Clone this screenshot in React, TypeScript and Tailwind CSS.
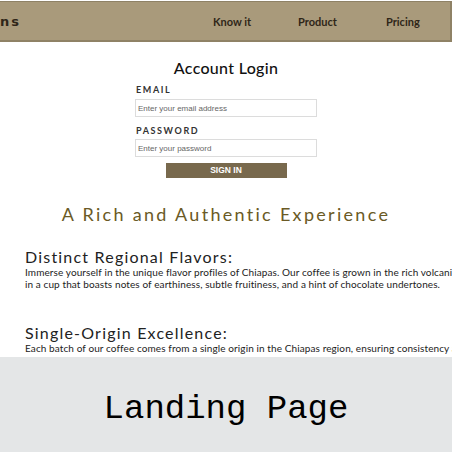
export default function App() {
  return (
    <div className="relative w-[452px] h-[452px] overflow-hidden bg-white font-['Lato','Open_Sans',sans-serif]">
      {/* Header */}
      <header className="mt-px h-[41px] flex items-center bg-[#a99a7b] border-t border-b-2 border-r-2 border-[#8f8266] text-[#2f2618]">
        <span className="mt-[2px] text-[13px] font-bold tracking-[2px] font-['DejaVu_Sans',sans-serif]">ns</span>
        <nav className="ml-auto mt-[2px] flex items-center text-[11px] font-bold">
          <a className="w-[85px]">Know it</a>
          <a className="w-[88px]">Product</a>
          <a className="w-[64px]">Pricing</a>
        </nav>
      </header>

      {/* Login */}
      <section className="flex flex-col items-center">
        <h1 className="mt-[16px] text-[16px] leading-[20px] font-medium tracking-[0.3px] text-[#111]">Account Login</h1>
        <form className="w-[182px] mt-[6px] flex flex-col">
          <label className="text-[9px] leading-[12px] font-bold tracking-[1.6px] text-[#333] pl-px">EMAIL</label>
          <input
            placeholder="Enter your email address"
            className="mt-[3px] h-[18px] border border-[#dcdcdc] px-[2px] text-[8px] font-['Liberation_Sans',sans-serif] placeholder:text-[#666] outline-none"
          />
          <label className="mt-[8px] text-[9px] leading-[12px] font-bold tracking-[1.6px] text-[#333] pl-px">PASSWORD</label>
          <input
            placeholder="Enter your password"
            className="mt-[2px] h-[18px] border border-[#dcdcdc] px-[2px] text-[8px] font-['Liberation_Sans',sans-serif] placeholder:text-[#666] outline-none"
          />
          <button
            type="button"
            className="self-center mt-[6px] w-[121px] h-[15px] bg-[#78694d] text-white text-[8.5px] font-bold font-['Liberation_Sans',sans-serif] leading-[15px]"
          >
            SIGN IN
          </button>
        </form>
      </section>

      {/* Experience */}
      <section>
        <h2 className="mt-[24px] text-center text-[18px] leading-[24px] tracking-[2.3px] text-[#6a5a25]">
          A Rich and Authentic Experience
        </h2>
        <div className="pl-[25px]">
          <h3 className="mt-[22px] text-[16px] leading-[18px] tracking-[1.2px] text-[#222]">Distinct Regional Flavors:</h3>
          <p className="text-[10px] leading-[12px] tracking-[0.1px] whitespace-nowrap text-[#222]">
            Immerse yourself in the unique flavor profiles of Chiapas. Our coffee is grown in the rich volcanic soils of the region, resulting
            <br />
            in a cup that boasts notes of earthiness, subtle fruitiness, and a hint of chocolate undertones.
          </p>
          <h3 className="mt-[34px] text-[16px] leading-[18px] tracking-[1.2px] text-[#222]">Single-Origin Excellence:</h3>
          <p className="text-[10px] leading-[12px] tracking-[0.1px] whitespace-nowrap text-[#222]">
            Each batch of our coffee comes from a single origin in the Chiapas region, ensuring consistency and
            <br />
            allowing you to experience the true and unique character of the land, from the growers to your cup.
          </p>
        </div>
      </section>

      {/* Caption band */}
      <div className="absolute left-0 right-0 top-[357px] bottom-0 bg-[#e4e6e7] flex items-center justify-center pt-[10px]">
        <span className="text-[34px] text-black font-['Liberation_Mono',monospace]">Landing Page</span>
      </div>
    </div>
  );
}
